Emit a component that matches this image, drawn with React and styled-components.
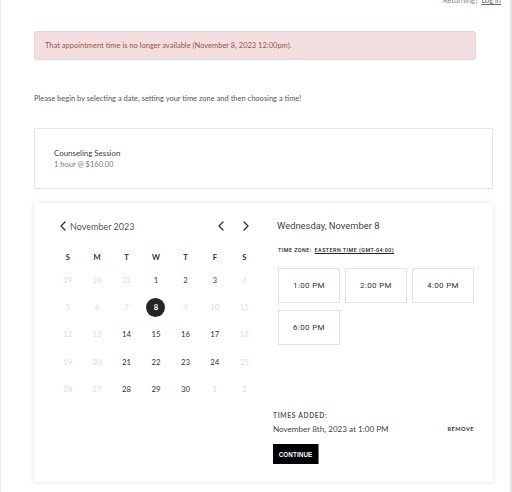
import React from "react";
import styled, { createGlobalStyle } from "styled-components";

const GlobalStyle = createGlobalStyle`
  html, body {
    margin: 0;
    padding: 0;
    background: #fff;
  }
  body {
    font-family: Lato, "Liberation Sans", sans-serif;
    color: #333;
  }
`;

const Page = styled.div`
  box-sizing: border-box;
  width: 512px;
  min-height: 492px;
  border-left: 1px solid #ececec;
  border-right: 2px solid #e4e4e4;
  padding: 0 18px 10px 33px;
  overflow: hidden;
`;

const TopBar = styled.div`
  display: flex;
  justify-content: flex-end;
  margin: -4px -9px 0 0;
  height: 10px;
  line-height: 10px;
  font-size: 7.5px;
  color: #8c7f74;

  a {
    color: #6f6a66;
    text-decoration: underline;
    margin-left: 3px;
  }
`;

const Alert = styled.div`
  box-sizing: border-box;
  width: 442px;
  height: 29px;
  margin-top: 25px;
  padding: 0 10px;
  display: flex;
  align-items: center;
  background: #f2dede;
  border: 1px solid #eed3d6;
  border-radius: 3px;
  color: #a4504c;
  font-size: 7.5px;
`;

const Intro = styled.p`
  margin: 32px 0 0;
  line-height: 14px;
  font-size: 7.5px;
  color: #555;
`;

const ServiceCard = styled.div`
  box-sizing: border-box;
  width: 459px;
  height: 61px;
  margin-top: 22px;
  padding: 18px 19px;
  border: 1px solid #e6e6e6;
`;

const ServiceTitle = styled.div`
  font-size: 7.9px;
  line-height: 12px;
  color: #3a3f47;
`;

const ServiceMeta = styled.div`
  font-size: 7.5px;
  line-height: 11px;
  color: #7a7a7a;
`;

const BookingCard = styled.div`
  box-sizing: border-box;
  width: 459px;
  margin-top: 14px;
  padding: 13px 19px 18px;
  background: #fff;
  box-shadow: 0 0 5px rgba(0, 0, 0, 0.12);
  display: grid;
  grid-template-columns: 206px 201px;
  column-gap: 14px;
`;

const Calendar = styled.div`
  display: flex;
  flex-direction: column;
`;

const MonthHeader = styled.div`
  display: flex;
  align-items: center;
  justify-content: space-between;
  height: 20px;
  padding: 0 10px 0 6px;
`;

const MonthLabel = styled.div`
  display: flex;
  align-items: center;
  gap: 4px;
  font-size: 9px;
  color: #555;
`;

const NavGroup = styled.div`
  display: flex;
  align-items: center;
  gap: 18px;
`;

const NavButton = styled.span`
  display: inline-flex;
  width: 7px;
  height: 10px;
  align-items: center;
  justify-content: center;
`;

const DayGrid = styled.div`
  display: grid;
  grid-template-columns: repeat(7, 1fr);
  grid-template-rows: 19px;
  grid-auto-rows: 27.2px;
  margin-top: 11.5px;
`;

const WeekDay = styled.div`
  display: flex;
  align-items: center;
  justify-content: center;
  font-size: 7.6px;
  font-weight: 700;
  color: #333;
`;

const Day = styled.div`
  display: flex;
  align-items: center;
  justify-content: center;
  font-size: 7.8px;
  color: ${(p) => (p.$muted ? "#dedede" : p.$early ? "#34466b" : "#333")};

  span {
    width: 19px;
    height: 19px;
    border-radius: 50%;
    display: flex;
    align-items: center;
    justify-content: center;
    background: ${(p) => (p.$selected ? "#252525" : "transparent")};
    color: ${(p) => (p.$selected ? "#fff" : "inherit")};
    font-weight: ${(p) => (p.$selected ? 700 : 400)};
  }
`;

const TimesPanel = styled.div`
  display: flex;
  flex-direction: column;
`;

const DayTitle = styled.div`
  padding-left: 4px;
  height: 20px;
  line-height: 20px;
  font-family: Roboto, "Liberation Sans", sans-serif;
  font-size: 9.4px;
  color: #444;
`;

const TimeZone = styled.div`
  padding-left: 5px;
  margin-top: 9px;
  line-height: 10px;
  font-family: Roboto, "Liberation Sans", sans-serif;
  font-size: 5.4px;
  font-weight: 500;
  letter-spacing: 0.45px;
  color: #222;

  u {
    margin-left: 3px;
  }
`;

const SlotGrid = styled.div`
  display: grid;
  grid-template-columns: repeat(3, 62px);
  grid-auto-rows: 35px;
  gap: 7px 5px;
  margin-top: 13px;
  padding-left: 5px;
`;

const Slot = styled.div`
  box-sizing: border-box;
  border: 1px solid #e2e2e2;
  display: flex;
  align-items: center;
  justify-content: center;
  font-family: Roboto, "Liberation Sans", sans-serif;
  font-size: 8px;
  letter-spacing: 0.35px;
  color: #333;
`;

const AddedLabel = styled.div`
  margin-top: 65px;
  line-height: 10px;
  font-size: 6.6px;
  font-weight: 700;
  letter-spacing: 0.7px;
  color: #555;
`;

const AddedRow = styled.div`
  display: flex;
  align-items: center;
  justify-content: space-between;
  margin-top: 1.5px;
  line-height: 14px;
  font-size: 8.1px;
  color: #444;
`;

const Remove = styled.span`
  font-size: 5.6px;
  font-weight: 700;
  letter-spacing: 0.5px;
  color: #333;
`;

const ContinueButton = styled.button`
  align-self: flex-start;
  margin-top: 8.5px;
  width: 46px;
  height: 20px;
  padding: 0;
  border: none;
  border-right: 1px solid #777;
  background: #000;
  color: #fff;
  font-family: "Liberation Sans", Arial, sans-serif;
  font-size: 6.3px;
  font-weight: 700;
  letter-spacing: 0.1px;
`;

const Chevron = ({ dir }) => (
  <svg width="6" height="10" viewBox="0 0 6 10">
    <polyline
      points={dir === "left" ? "5,1 1,5 5,9" : "1,1 5,5 1,9"}
      fill="none"
      stroke="#333"
      strokeWidth="1.3"
      strokeLinecap="round"
      strokeLinejoin="round"
    />
  </svg>
);

const weekDays = ["S", "M", "T", "W", "T", "F", "S"];

// November 2023 grid, padded with the neighbouring months
const days = [
  [29, "m"], [30, "m"], [31, "m"], [1, "e"], [2, "e"], [3, "e"], [4, "m"],
  [5, "m"], [6, "m"], [7, "m"], [8, "s"], [9, "m"], [10, "m"], [11, "m"],
  [12, "m"], [13, "m"], [14, "a"], [15, "a"], [16, "a"], [17, "a"], [18, "m"],
  [19, "m"], [20, "m"], [21, "a"], [22, "a"], [23, "a"], [24, "a"], [25, "m"],
  [26, "m"], [27, "m"], [28, "a"], [29, "a"], [30, "a"], [1, "m"], [2, "m"],
];

const slots = ["1:00 PM", "2:00 PM", "4:00 PM", "6:00 PM"];

export default function App() {
  return (
    <>
      <GlobalStyle />
      <Page>
        <TopBar>
          Returning? <a href="#">Log in</a>
        </TopBar>

        <Alert>
          That appointment time is no longer available (November 8, 2023 12:00pm).
        </Alert>

        <Intro>
          Please begin by selecting a date, setting your time zone and then choosing a time!
        </Intro>

        <ServiceCard>
          <ServiceTitle>Counseling Session</ServiceTitle>
          <ServiceMeta>1 hour @ $160.00</ServiceMeta>
        </ServiceCard>

        <BookingCard>
          <Calendar>
            <MonthHeader>
              <MonthLabel>
                <NavButton>
                  <Chevron dir="left" />
                </NavButton>
                November 2023
              </MonthLabel>
              <NavGroup>
                <NavButton>
                  <Chevron dir="left" />
                </NavButton>
                <NavButton>
                  <Chevron dir="right" />
                </NavButton>
              </NavGroup>
            </MonthHeader>
            <DayGrid>
              {weekDays.map((d, i) => (
                <WeekDay key={"w" + i}>{d}</WeekDay>
              ))}
              {days.map(([n, k], i) => (
                <Day
                  key={i}
                  $muted={k === "m"}
                  $early={k === "e"}
                  $selected={k === "s"}
                >
                  <span>{n}</span>
                </Day>
              ))}
            </DayGrid>
          </Calendar>

          <TimesPanel>
            <DayTitle>Wednesday, November 8</DayTitle>
            <TimeZone>
              TIME ZONE:<u>EASTERN TIME (GMT-04:00)</u>
            </TimeZone>
            <SlotGrid>
              {slots.map((s) => (
                <Slot key={s}>{s}</Slot>
              ))}
            </SlotGrid>
            <AddedLabel>TIMES ADDED:</AddedLabel>
            <AddedRow>
              November 8th, 2023 at 1:00 PM
              <Remove>REMOVE</Remove>
            </AddedRow>
            <ContinueButton>CONTINUE</ContinueButton>
          </TimesPanel>
        </BookingCard>
      </Page>
    </>
  );
}
